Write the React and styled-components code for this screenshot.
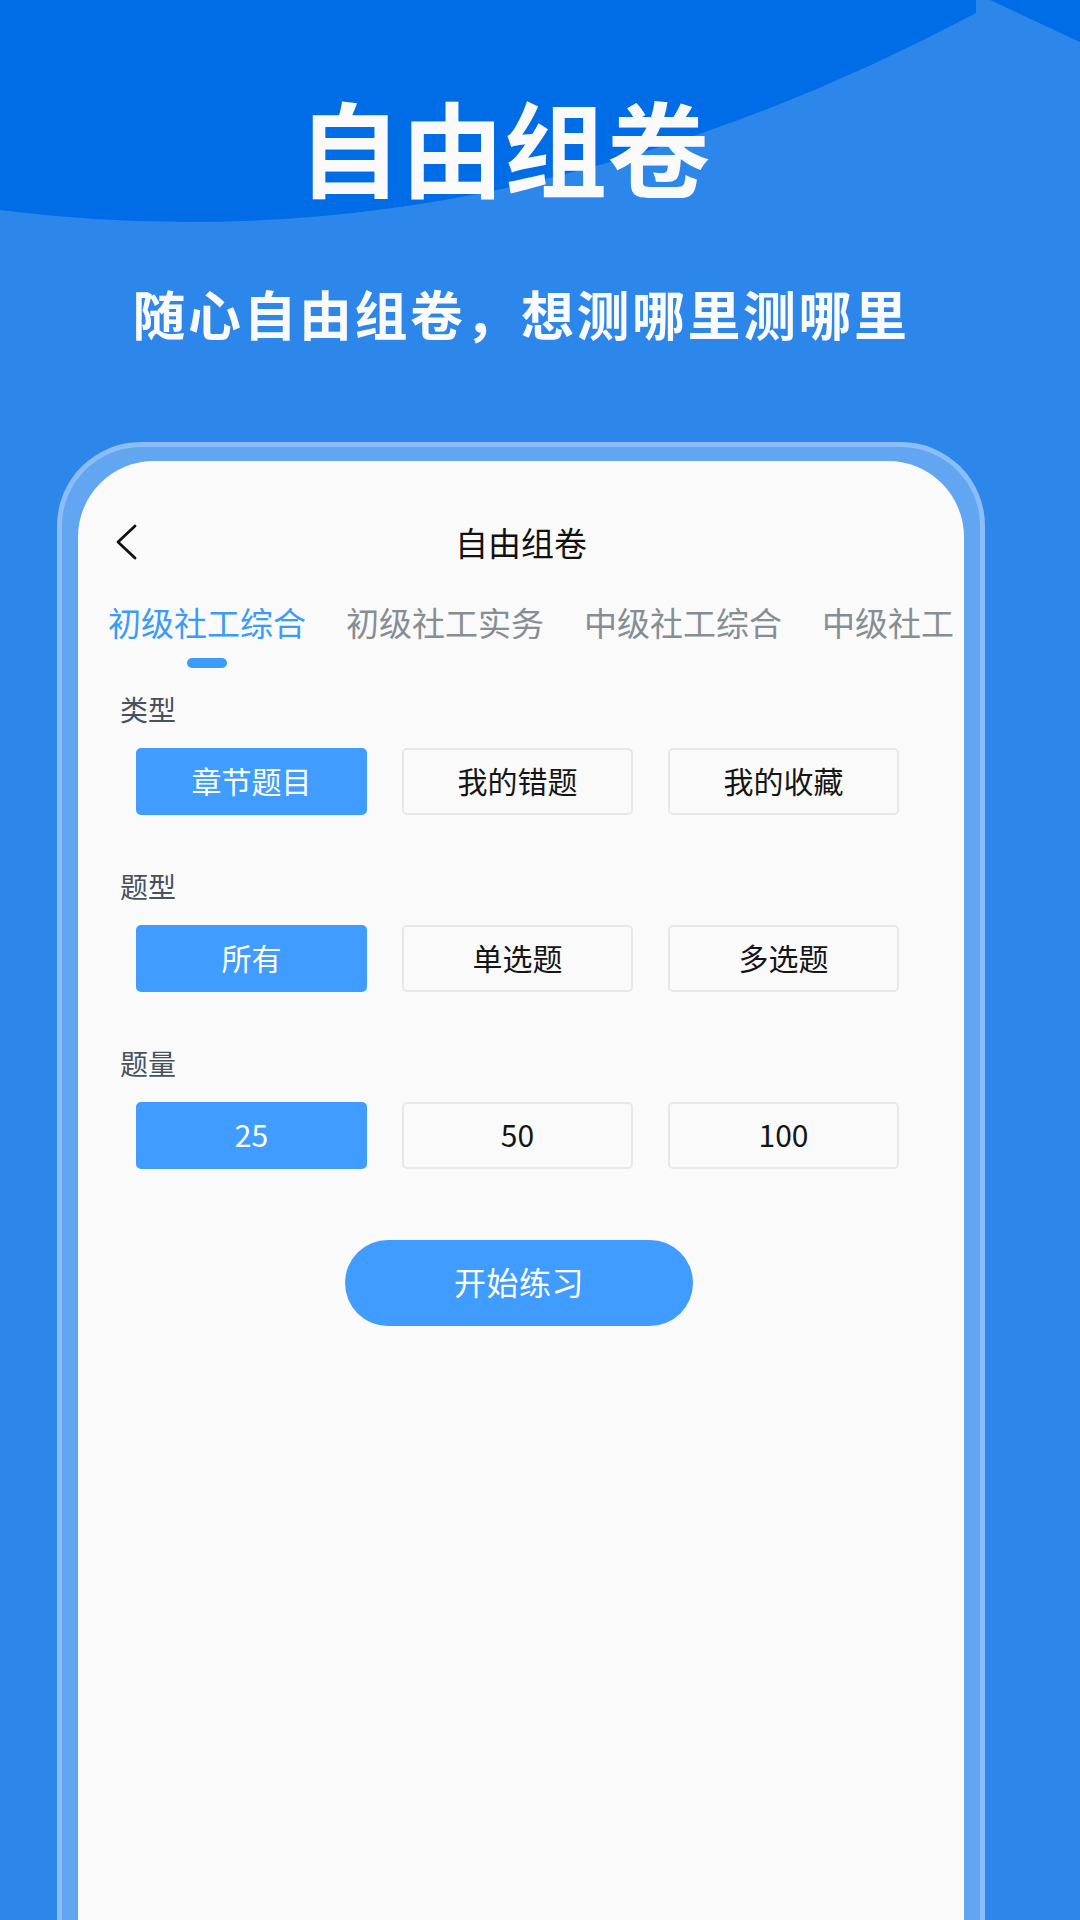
import React, { useState } from "react";
import styled, { createGlobalStyle } from "styled-components";

const GlobalStyle = createGlobalStyle`
  html, body {
    margin: 0;
    padding: 0;
  }
  body {
    font-family: "Noto Sans CJK SC", "Noto Sans", sans-serif;
    background: #2d86e9;
  }
  * {
    box-sizing: border-box;
  }
`;

const Page = styled.div`
  position: relative;
  width: 1080px;
  height: 1920px;
  overflow: hidden;
  background: #2d86e9;
  display: flex;
  flex-direction: column;
`;

const Decor = styled.svg`
  position: absolute;
  top: 0;
  left: 0;
  z-index: 0;
`;

const Hero = styled.header`
  position: relative;
  z-index: 1;
  display: flex;
  flex-direction: column;
  padding-top: 94px;
`;

const Headline = styled.h1`
  margin: 0;
  padding-right: 72px;
  text-align: center;
  font-size: 103px;
  line-height: 103px;
  font-weight: 700;
  color: #fafafa;
`;

const Subtitle = styled.p`
  margin: 86px 0 0;
  padding-right: 38px;
  text-align: center;
  font-size: 53px;
  line-height: 60px;
  font-weight: 700;
  letter-spacing: 2.5px;
  color: #fafafa;
`;

const Frame = styled.div`
  position: relative;
  z-index: 1;
  flex: 1;
  display: flex;
  margin: 99px 95px 0 57px;
  padding: 14px 16px 0;
  background: #62a5f1;
  border: 5px solid #8bbdf6;
  border-bottom: none;
  border-radius: 84px 84px 0 0;
`;

const Panel = styled.section`
  flex: 1;
  display: flex;
  flex-direction: column;
  padding-top: 40px;
  background: #fafafa;
  border-radius: 76px 76px 0 0;
  overflow: hidden;
`;

const NavBar = styled.div`
  display: grid;
  grid-template-columns: 1fr auto 1fr;
  align-items: center;
  height: 82px;
`;

const BackButton = styled.button`
  justify-self: start;
  display: flex;
  align-items: center;
  padding: 0 0 0 37px;
  border: none;
  background: none;
  cursor: pointer;
`;

const NavTitle = styled.h2`
  margin: 0;
  font-size: 33px;
  line-height: 46px;
  font-weight: 400;
  color: #111;
`;

const TabStrip = styled.nav`
  display: flex;
  gap: 40px;
  margin: 16px 11px 0 0;
  padding-left: 30px;
  overflow: hidden;
`;

const Tab = styled.button`
  flex: none;
  display: flex;
  flex-direction: column;
  align-items: center;
  padding: 0;
  border: none;
  background: none;
  font-family: inherit;
  font-size: 33px;
  line-height: 46px;
  white-space: nowrap;
  color: ${p => (p.$active ? "#3a9bfa" : "#868e94")};
  cursor: pointer;

  &::after {
    content: "";
    width: 40px;
    height: 10px;
    margin-top: 13px;
    border-radius: 5px;
    background: ${p => (p.$active ? "#3d9cfb" : "transparent")};
  }
`;

const Section = styled.div`
  display: flex;
  flex-direction: column;
  margin-top: ${p => p.$top}px;
`;

const Label = styled.div`
  padding-left: 42px;
  font-size: 28px;
  line-height: 36px;
  color: #48525c;
`;

const OptionRow = styled.div`
  display: flex;
  gap: 35px;
  margin-top: 21px;
  padding-left: 58px;
`;

const Option = styled.button`
  width: 231px;
  height: 67px;
  display: flex;
  align-items: center;
  justify-content: center;
  padding: 0 0 4px;
  border-radius: 5px;
  border: 2px solid ${p => (p.$selected ? "#409cfe" : "#e8e8e8")};
  background: ${p => (p.$selected ? "#409cfe" : "#fafafa")};
  color: ${p => (p.$selected ? "#fff" : "#151515")};
  font-family: inherit;
  font-size: 30px;
  line-height: 40px;
  cursor: pointer;
`;

const StartButton = styled.button`
  align-self: center;
  width: 348px;
  height: 86px;
  margin: 71px 0 0 -4px;
  padding: 0 0 4px;
  border: none;
  border-radius: 43px;
  background: #409cfe;
  color: #fff;
  font-family: inherit;
  font-size: 32px;
  letter-spacing: 0.5px;
  cursor: pointer;
`;

const tabs = ["初级社工综合", "初级社工实务", "中级社工综合", "中级社工实务"];

const groups = [
  { key: "type", label: "类型", options: ["章节题目", "我的错题", "我的收藏"], top: 23 },
  { key: "kind", label: "题型", options: ["所有", "单选题", "多选题"], top: 53 },
  { key: "count", label: "题量", options: ["25", "50", "100"], top: 53 }
];

function ChevronLeft() {
  return (
    <svg width="22" height="36" viewBox="0 0 22 36" fill="none">
      <path d="M20 2 L3 18 L20 34" stroke="#111" strokeWidth="2.8" strokeLinecap="round" strokeLinejoin="round" />
    </svg>
  );
}

export default function App() {
  const [activeTab, setActiveTab] = useState(0);
  const [picked, setPicked] = useState({ type: 0, kind: 0, count: 0 });

  return (
    <Page>
      <GlobalStyle />
      <Decor width="1080" height="300" viewBox="0 0 1080 300">
        <path d="M0 0 H976 V13 Q488 272 0 210 Z" fill="#006ce6" />
        <path d="M990 0 H1080 V42 Z" fill="#006ce6" />
      </Decor>
      <Hero>
        <Headline>自由组卷</Headline>
        <Subtitle>随心自由组卷，想测哪里测哪里</Subtitle>
      </Hero>
      <Frame>
        <Panel>
          <NavBar>
            <BackButton aria-label="back">
              <ChevronLeft />
            </BackButton>
            <NavTitle>自由组卷</NavTitle>
            <span />
          </NavBar>
          <TabStrip>
            {tabs.map((t, i) => (
              <Tab key={t} $active={i === activeTab} onClick={() => setActiveTab(i)}>
                {t}
              </Tab>
            ))}
          </TabStrip>
          {groups.map(g => (
            <Section key={g.key} $top={g.top}>
              <Label>{g.label}</Label>
              <OptionRow>
                {g.options.map((o, i) => (
                  <Option
                    key={o}
                    $selected={picked[g.key] === i}
                    onClick={() => setPicked(prev => ({ ...prev, [g.key]: i }))}
                  >
                    {o}
                  </Option>
                ))}
              </OptionRow>
            </Section>
          ))}
          <StartButton>开始练习</StartButton>
        </Panel>
      </Frame>
    </Page>
  );
}
